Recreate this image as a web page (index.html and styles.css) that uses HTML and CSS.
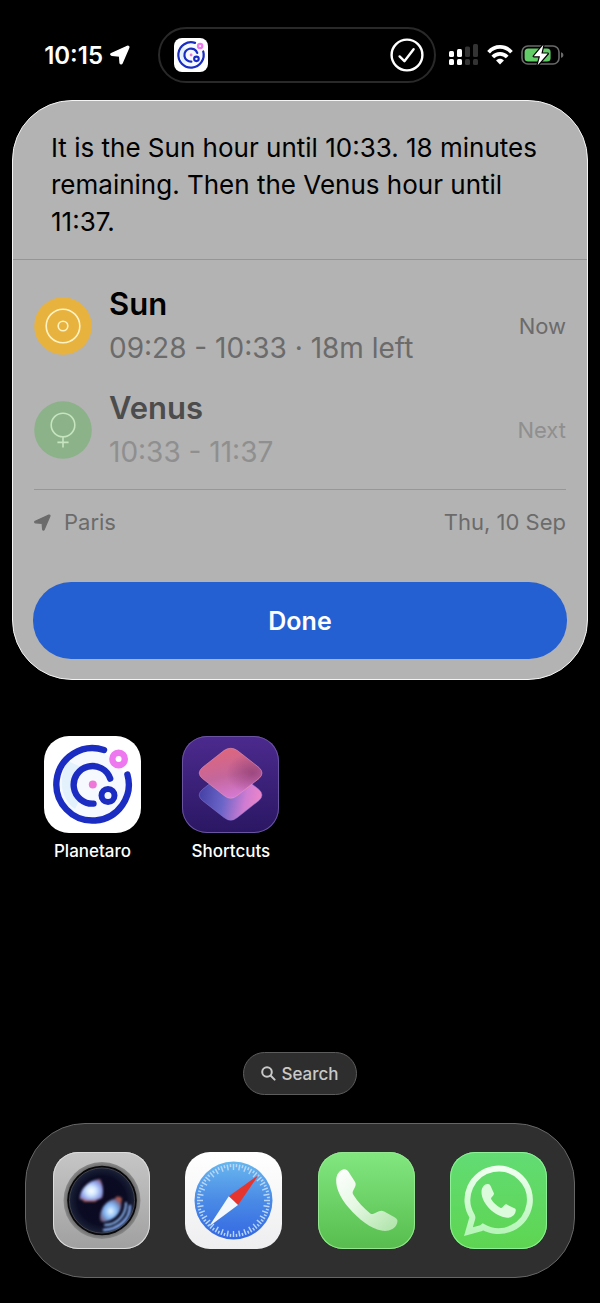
FILE: index.html
```
<!DOCTYPE html>
<html lang="en">
<head>
<meta charset="utf-8">
<meta name="viewport" content="width=device-width, initial-scale=1">
<title>Planetary hours</title>
<link rel="stylesheet" href="styles.css">
</head>
<body>
<!-- shared shapes -->
<svg class="defs" aria-hidden="true">
  <symbol id="arrow" viewBox="0 0 20 20">
    <path d="M1.4 8.6 17.4 1.3c.9-.4 1.7.4 1.3 1.3L12 18.2c-.4 1-1.8.9-1.9-.2L9.6 11 2 10.400C.8 10.300.4 9.100 1.400 8.600z" stroke-width="1.4" stroke-linejoin="round"/>
  </symbol>
  <symbol id="planetaro" viewBox="0 0 97 97">
    <circle cx="48.5" cy="48.5" r="33" fill="#f6faff"/>
    <path d="M24 25C13 43 17 63 31 73L36 63C26 54 26 41 37 31z" fill="#e2f1fc"/>
    <g fill="none" stroke="#1a2cc2" stroke-width="6.4" stroke-linecap="round">
      <path d="M60 14A36.2 36.2 0 1 0 83.4 38.5"/>
      <path d="M66.2 42.6A18.8 18.8 0 1 0 49.5 67.6"/>
      <circle cx="64" cy="59.500" r="6.5" stroke-width="6"/>
    </g>
    <circle cx="74.6" cy="23" r="6.2" fill="#fff" stroke="#ee78f0" stroke-width="6.4"/>
    <circle cx="48.8" cy="48.5" r="4" fill="#ee78d8"/>
  </symbol>
</svg>

<header class="status">
  <div class="clock"><span>10:15</span><svg class="clock-arrow"><use href="#arrow"/></svg></div>
  <div class="island">
    <svg class="island-app"><use href="#planetaro"/></svg>
    <svg class="island-check" viewBox="0 0 34 34">
      <circle cx="17" cy="17" r="15.4"/>
      <path d="M9.6 18.4 14.4 23.2 23.6 11.2"/>
    </svg>
  </div>
  <div class="signals">
    <svg width="30" height="22" viewBox="0 0 30 22" fill="#fff">
      <rect x="0" y="7" width="5" height="6" rx="1.5"/>
      <rect x="8" y="5" width="5" height="8" rx="1.5"/>
      <rect x="0" y="15" width="5" height="6" rx="1.5"/>
      <rect x="8" y="15" width="5" height="6" rx="1.5"/>
      <g fill="#333">
        <rect x="16" y="2.5" width="5" height="10.5" rx="1.5"/>
        <rect x="24" y="0" width="5" height="13" rx="1.5"/>
        <rect x="16" y="15" width="5" height="6" rx="1.5"/>
        <rect x="24" y="15" width="5" height="6" rx="1.5"/>
      </g>
    </svg>
    <svg width="26" height="20" viewBox="0 0 26 20" fill="none" stroke="#fff" stroke-width="3.8">
      <path d="M1.6 7.2C8 .2 18 .2 24.4 7.2"/>
      <path d="M5.8 12C9.8 7.800 16.200 7.800 20.200 12"/>
      <path d="M13 19.400 9.100 15.400C11 13.200 15 13.200 16.900 15.400z" fill="#fff" stroke="none"/>
    </svg>
    <svg width="43" height="22" viewBox="0 0 43 22">
      <rect x="1" y="2" width="37" height="18" rx="6" fill="none" stroke="#6a6a6a" stroke-width="1.6"/>
      <path d="M40 8.2c3.2.6 3.2 5 0 5.6z" fill="#6a6a6a"/>
      <rect x="3.6" y="4.4" width="26" height="13.2" rx="3.6" fill="#62cc66"/>
      <path d="M22.4.8 12.8 12.2h6.2L16.6 21.2 26.8 9.6H20.4z" fill="#fff" stroke="#000" stroke-width="2.4" paint-order="stroke" stroke-linejoin="round"/>
    </svg>
  </div>
</header>

<main class="home">
  <section class="card">
    <p class="answer">It is the Sun hour until 10:33. 18 minutes remaining. Then the Venus hour until 11:37.</p>
    <div class="card-body">
      <ul class="hours">
        <li class="hour">
          <svg class="planet" viewBox="0 0 58 58">
            <circle cx="29" cy="29" r="28.8" fill="#e8b23f"/>
            <g fill="none" stroke="#fff3c4" stroke-width="1.6">
              <circle cx="29" cy="29" r="16.8"/>
              <circle cx="29" cy="29" r="4.8"/>
            </g>
          </svg>
          <div class="hour-text">
            <h2>Sun</h2>
            <p>09:28 - 10:33 · 18m left</p>
          </div>
          <span class="tag">Now</span>
        </li>
        <li class="hour hour-next">
          <svg class="planet" viewBox="0 0 58 58">
            <circle cx="29" cy="29" r="28.8" fill="#8cb28a"/>
            <g fill="none" stroke="#c5e4bf" stroke-width="1.6">
              <circle cx="29" cy="24" r="11.8"/>
              <path d="M29 35.8V46.4M23.4 41.4H34.6"/>
            </g>
          </svg>
          <div class="hour-text">
            <h2>Venus</h2>
            <p>10:33 - 11:37</p>
          </div>
          <span class="tag">Next</span>
        </li>
      </ul>
      <div class="place">
        <span class="city"><svg class="city-arrow"><use href="#arrow"/></svg>Paris</span>
        <span>Thu, 10 Sep</span>
      </div>
      <button type="button" class="done">Done</button>
    </div>
  </section>

  <nav class="apps">
    <a class="app" href="#">
      <svg class="icon icon-planetaro"><use href="#planetaro"/></svg>
      <span>Planetaro</span>
    </a>
    <a class="app" href="#">
      <svg class="icon icon-shortcuts" viewBox="0 0 97 97">
        <defs>
          <linearGradient id="sc-top" x1=".3" y1="0" x2=".6" y2="1">
            <stop offset="0" stop-color="#e0667a"/>
            <stop offset=".55" stop-color="#c4679c"/>
            <stop offset="1" stop-color="#d77bd8"/>
          </linearGradient>
          <linearGradient id="sc-low" x1="0" y1=".4" x2="1" y2=".55">
            <stop offset="0" stop-color="#4440a4"/>
            <stop offset=".4" stop-color="#6b65c8"/>
            <stop offset=".75" stop-color="#cf7cd2"/>
            <stop offset="1" stop-color="#ee86c8"/>
          </linearGradient>
          <radialGradient id="sc-dark" cx=".85" cy=".5" r=".42">
            <stop offset="0" stop-color="#7a2c62" stop-opacity=".55"/>
            <stop offset="1" stop-color="#7a2c62" stop-opacity="0"/>
          </radialGradient>
          <path id="sc-tile" d="M42 14.5Q48.7 10 55.4 14.5L77 31.5Q83 37 77 42.5L55.4 59.5Q48.7 65 42 59.5L20.4 42.5Q14 37 20.4 31.5z"/>
        </defs>
        <use href="#sc-tile" y="22" fill="url(#sc-low)" stroke="#8b7ce0" stroke-opacity=".5"/>
        <use href="#sc-tile" fill="url(#sc-top)"/>
        <use href="#sc-tile" fill="url(#sc-dark)" stroke="#f09ab0" stroke-opacity=".55"/>
      </svg>
      <span>Shortcuts</span>
    </a>
  </nav>

  <button type="button" class="search">
    <svg width="15" height="15" viewBox="0 0 15 15" fill="none" stroke="#c9c9c9" stroke-width="2" stroke-linecap="round">
      <circle cx="6" cy="6" r="4.8"/>
      <path d="M9.8 9.8 13.6 13.6"/>
    </svg>
    Search
  </button>

  <nav class="dock">
    <a href="#" aria-label="Camera">
      <svg class="icon icon-camera" viewBox="0 0 97 97">
        <defs>
          <radialGradient id="lens"><stop offset="0" stop-color="#0b0820"/><stop offset=".75" stop-color="#0a0c24"/><stop offset="1" stop-color="#1c2238"/></radialGradient>
          <radialGradient id="glow1" cx=".5" cy=".55" r=".6"><stop offset="0" stop-color="#fff"/><stop offset=".35" stop-color="#cfe6ff"/><stop offset=".75" stop-color="#8b9be6"/><stop offset="1" stop-color="#8a6078"/></radialGradient>
          <radialGradient id="glow2" cx=".5" cy=".55" r=".6"><stop offset="0" stop-color="#e8f8ff"/><stop offset=".5" stop-color="#80b4f2"/><stop offset="1" stop-color="#6c4a66"/></radialGradient>
          <radialGradient id="rim"><stop offset=".84" stop-color="#5c5c5c"/><stop offset="1" stop-color="#8b8b8b"/></radialGradient>
          <filter id="soft"><feGaussianBlur stdDeviation=".8"/></filter>
        </defs>
        <circle cx="49" cy="48.5" r="38.5" fill="url(#rim)"/>
        <circle cx="49" cy="48.5" r="34.8" fill="#08080a"/>
        <circle cx="49" cy="48.5" r="32.6" fill="url(#lens)" stroke="#4a4e58" stroke-width=".8"/>
        <g filter="url(#soft)">
          <path d="M47 27C35 28 27 37 26.500 47C34 50 43 49 49 46C51 40 50 32 47 27z" fill="url(#glow1)"/>
          <path d="M47 66C47 55 55 46 67 46C71 55 66 67 51 70C48 70 47 69 47 66z" fill="url(#glow2)"/>
          <path d="M62 46C64 44 68 44 69 47L68 52z" fill="#a3544a"/>
          <path d="M28 46C33 49 42 49 47 46.500L42 50 31 50z" fill="#a3544a"/>
          <g fill="none" stroke-linecap="round">
            <path d="M52 73C64 73 73 63 73 51" stroke="#93bdf6" stroke-width="2"/>
            <path d="M51 78C66 77 77 67 77 54" stroke="#86aef4" stroke-width="2.400"/>
          </g>
        </g>
      </svg>
    </a>
    <a href="#" aria-label="Safari">
      <svg class="icon icon-safari" viewBox="0 0 97 97">
        <defs>
          <linearGradient id="sea" x1="0" y1="0" x2="0" y2="1"><stop offset="0" stop-color="#68b7ee"/><stop offset=".5" stop-color="#4a8ae6"/><stop offset="1" stop-color="#3468e2"/></linearGradient>
        </defs>
        <circle cx="48.5" cy="48.5" r="39" fill="url(#sea)"/>
        <g fill="none" stroke="#b9d6f7">
          <circle cx="48.5" cy="48.5" r="33.5" stroke-width="6" pathLength="72" stroke-dasharray=".5 1.5" stroke-dashoffset=".25"/>
          <circle cx="48.5" cy="48.5" r="35" stroke-width="3" pathLength="72" stroke-dasharray=".5 1.5" stroke-dashoffset="1.25"/>
        </g>
        <path d="M73.5 23 43.8 44.2 53 53z" fill="#e5352e"/>
        <path d="M24 74.5 43.8 44.2 53 53z" fill="#f4f7fc"/>
      </svg>
    </a>
    <a href="#" aria-label="Phone">
      <svg class="icon icon-phone" viewBox="0 0 97 97">
        <defs>
          <linearGradient id="handset" x1="0" y1="0" x2=".8" y2="1"><stop offset="0" stop-color="#fff"/><stop offset=".5" stop-color="#e6f8e4"/><stop offset="1" stop-color="#b5e6b0"/></linearGradient>
        </defs>
        <path d="M18.2 28C18.5 22 21.5 18.5 25 17.5C27.5 16.8 29 17.5 30.5 19.8L36.8 29.5C38 31.5 38 33 37 35L35 39C34.4 40.5 34.6 41.5 35.5 43C40 50 46 56.5 52 61.2C53.3 62.2 54.3 62.3 55.5 61.7L61 59.2C63 58.3 64.5 58.5 66.2 59.5L77 65.6C79.5 67 80 69 79 71.5C77 77 71 79.6 64.5 78.8C53 77.3 40 66.5 31 56C22 45.5 18 36.5 18.2 28z" fill="url(#handset)"/>
      </svg>
    </a>
    <a href="#" aria-label="WhatsApp">
      <svg class="icon icon-whatsapp" viewBox="0 0 97 97">
        <defs>
          <linearGradient id="bubble" x1="0" y1="0" x2="0" y2="1"><stop offset="0" stop-color="#f0fff0"/><stop offset="1" stop-color="#b8f5ba"/></linearGradient>
        </defs>
        <path d="M33 74.8A31.2 31.2 0 1 0 22 64Q22.6 65.2 22.2 66.5L18.4 79.6 31 76.2Q32 75.6 33 74.8z" fill="none" stroke="url(#bubble)" stroke-width="6"/>
        <path d="M31.5 40C31.5 35.5 34.5 32 37.5 32C39.2 31.8 40 32.5 40.6 34L43.8 41C44.2 42 43.9 42.7 43.2 43.5L41.5 45.4C40.9 46.2 40.9 46.8 41.4 47.6C43.5 51 46.5 53.8 50.2 55.7C51.2 56.2 51.8 56.1 52.5 55.3L54.6 53C55.3 52.3 56 52.2 56.9 52.6L64.4 56.3C65.6 56.9 66 57.5 65.7 59C65 63.5 61 66 57 65.7C44.5 64.5 31.5 51.5 31.5 40z" fill="#dcfbdc"/>
      </svg>
    </a>
  </nav>
</main>
</body>
</html>
```

FILE: styles.css
```
* {
  box-sizing: border-box;
  margin: 0;
  padding: 0;
}
body {
  display: flex;
  flex-direction: column;
  min-height: 100vh;
  background: #000;
  color: #fff;
  font-family: Inter, "Liberation Sans", sans-serif;
}
svg {
  display: block;
  flex: none;
}
a {
  color: inherit;
  text-decoration: none;
}
button {
  border: 0;
  font-family: inherit;
  cursor: pointer;
}
.defs {
  position: absolute;
  width: 0;
  height: 0;
}

/* status bar */
.status {
  display: grid;
  grid-template-columns: 1fr 278px 1fr;
  align-items: center;
  padding: 27px 6px 17px 0;
}
.clock {
  display: flex;
  align-items: center;
  justify-content: flex-end;
  gap: 7px;
  padding-right: 28px;
  font-size: 24px;
  font-weight: 600;
}
.clock-arrow {
  width: 20px;
  height: 20px;
  fill: #fff;
  stroke: #fff;
}
.island {
  display: flex;
  align-items: center;
  justify-content: space-between;
  height: 56px;
  padding: 0 10px 0 14px;
  border: 2px solid #292929;
  border-radius: 28px;
}
.island-app {
  width: 34px;
  height: 34px;
  background: #fff;
  border-radius: 8px;
}
.island-check {
  width: 34px;
  height: 34px;
  fill: none;
  stroke: #fff;
  stroke-width: 2.4;
  stroke-linecap: round;
  stroke-linejoin: round;
}
.signals {
  display: flex;
  align-items: center;
  gap: 8px;
  padding-left: 13px;
}

.home {
  display: flex;
  flex: 1;
  flex-direction: column;
  align-items: center;
}

/* answer card */
.card {
  align-self: stretch;
  margin: 0 12px;
  overflow: hidden;
  border: 1px solid #f4f4f4;
  border-radius: 60px;
  background: #b3b3b3;
  color: #000;
}
.answer {
  padding: 28px 38px 19px;
  border-bottom: 1px solid #959595;
  font-size: 26px;
  line-height: 37px;
}
.card-body {
  padding: 21px 20px 20px;
}
.hours {
  display: grid;
  gap: 14px;
  padding: 0 1px 14px;
  list-style: none;
}
.hour {
  display: flex;
  align-items: center;
  gap: 17px;
}
.planet {
  width: 58px;
  height: 58px;
}
.hour-text {
  flex: 1;
  line-height: 45px;
}
.hour-text h2 {
  font-size: 31px;
  font-weight: 600;
}
.hour-text p {
  color: #6b6b6b;
  font-size: 28px;
}
.tag {
  color: #6b6b6b;
  font-size: 22px;
}
.hour-next h2 {
  color: #4c4c4c;
}
.hour-next p,
.hour-next .tag {
  color: #8f8f8f;
}
.place {
  display: flex;
  justify-content: space-between;
  margin: 0 1px;
  padding: 16px 0 44px;
  border-top: 1px solid #979797;
  color: #6b6b6b;
  font-size: 22px;
  line-height: 32px;
}
.city {
  display: flex;
  align-items: center;
  gap: 13px;
}
.city-arrow {
  width: 17px;
  height: 17px;
  fill: #6b6b6b;
  stroke: #6b6b6b;
}
.done {
  width: 100%;
  height: 77px;
  border-radius: 38px;
  background: #2560d2;
  color: #fff;
  font-size: 25px;
  font-weight: 600;
}

/* home screen */
.apps {
  display: grid;
  grid-template-columns: repeat(4, 97px);
  justify-content: space-between;
  align-self: stretch;
  padding: 56px 44px 0;
}
.app {
  display: flex;
  flex-direction: column;
  align-items: center;
  gap: 6px;
  font-size: 17px;
  font-weight: 500;
  line-height: 24px;
}
.icon {
  width: 97px;
  height: 97px;
  border-radius: 25px;
}
.icon-planetaro {
  background: #fff;
}
.icon-safari {
  background: linear-gradient(#fff, #eeeef0);
}
.icon-shortcuts {
  background: linear-gradient(#4c2a8e, #2a1763);
  box-shadow: inset 0 0 0 1px #6b549f;
}
.icon-camera {
  background: linear-gradient(#c6c6c6, #a0a0a0);
  box-shadow: inset 0 0 0 1px #dcdcdc;
}
.icon-phone {
  background: linear-gradient(#82e780, #58bd4e);
  box-shadow: inset 0 0 0 1px #93e88f;
}
.icon-whatsapp {
  background: linear-gradient(#62dc74, #5ed551);
  box-shadow: inset 0 0 0 1px #8df097;
}
.search {
  display: flex;
  align-items: center;
  gap: 5px;
  height: 43px;
  margin-top: auto;
  padding: 0 17px;
  border: 1px solid #5c5c5c;
  border-radius: 22px;
  background: #2e2e2e;
  color: #c9c9c9;
  font-size: 17px;
  font-weight: 500;
}
.dock {
  display: flex;
  align-self: stretch;
  justify-content: space-between;
  margin: 28px 25px 25px;
  padding: 28px 27px;
  border: 1px solid #666;
  border-radius: 60px;
  background: #2f2f2f;
}
```
